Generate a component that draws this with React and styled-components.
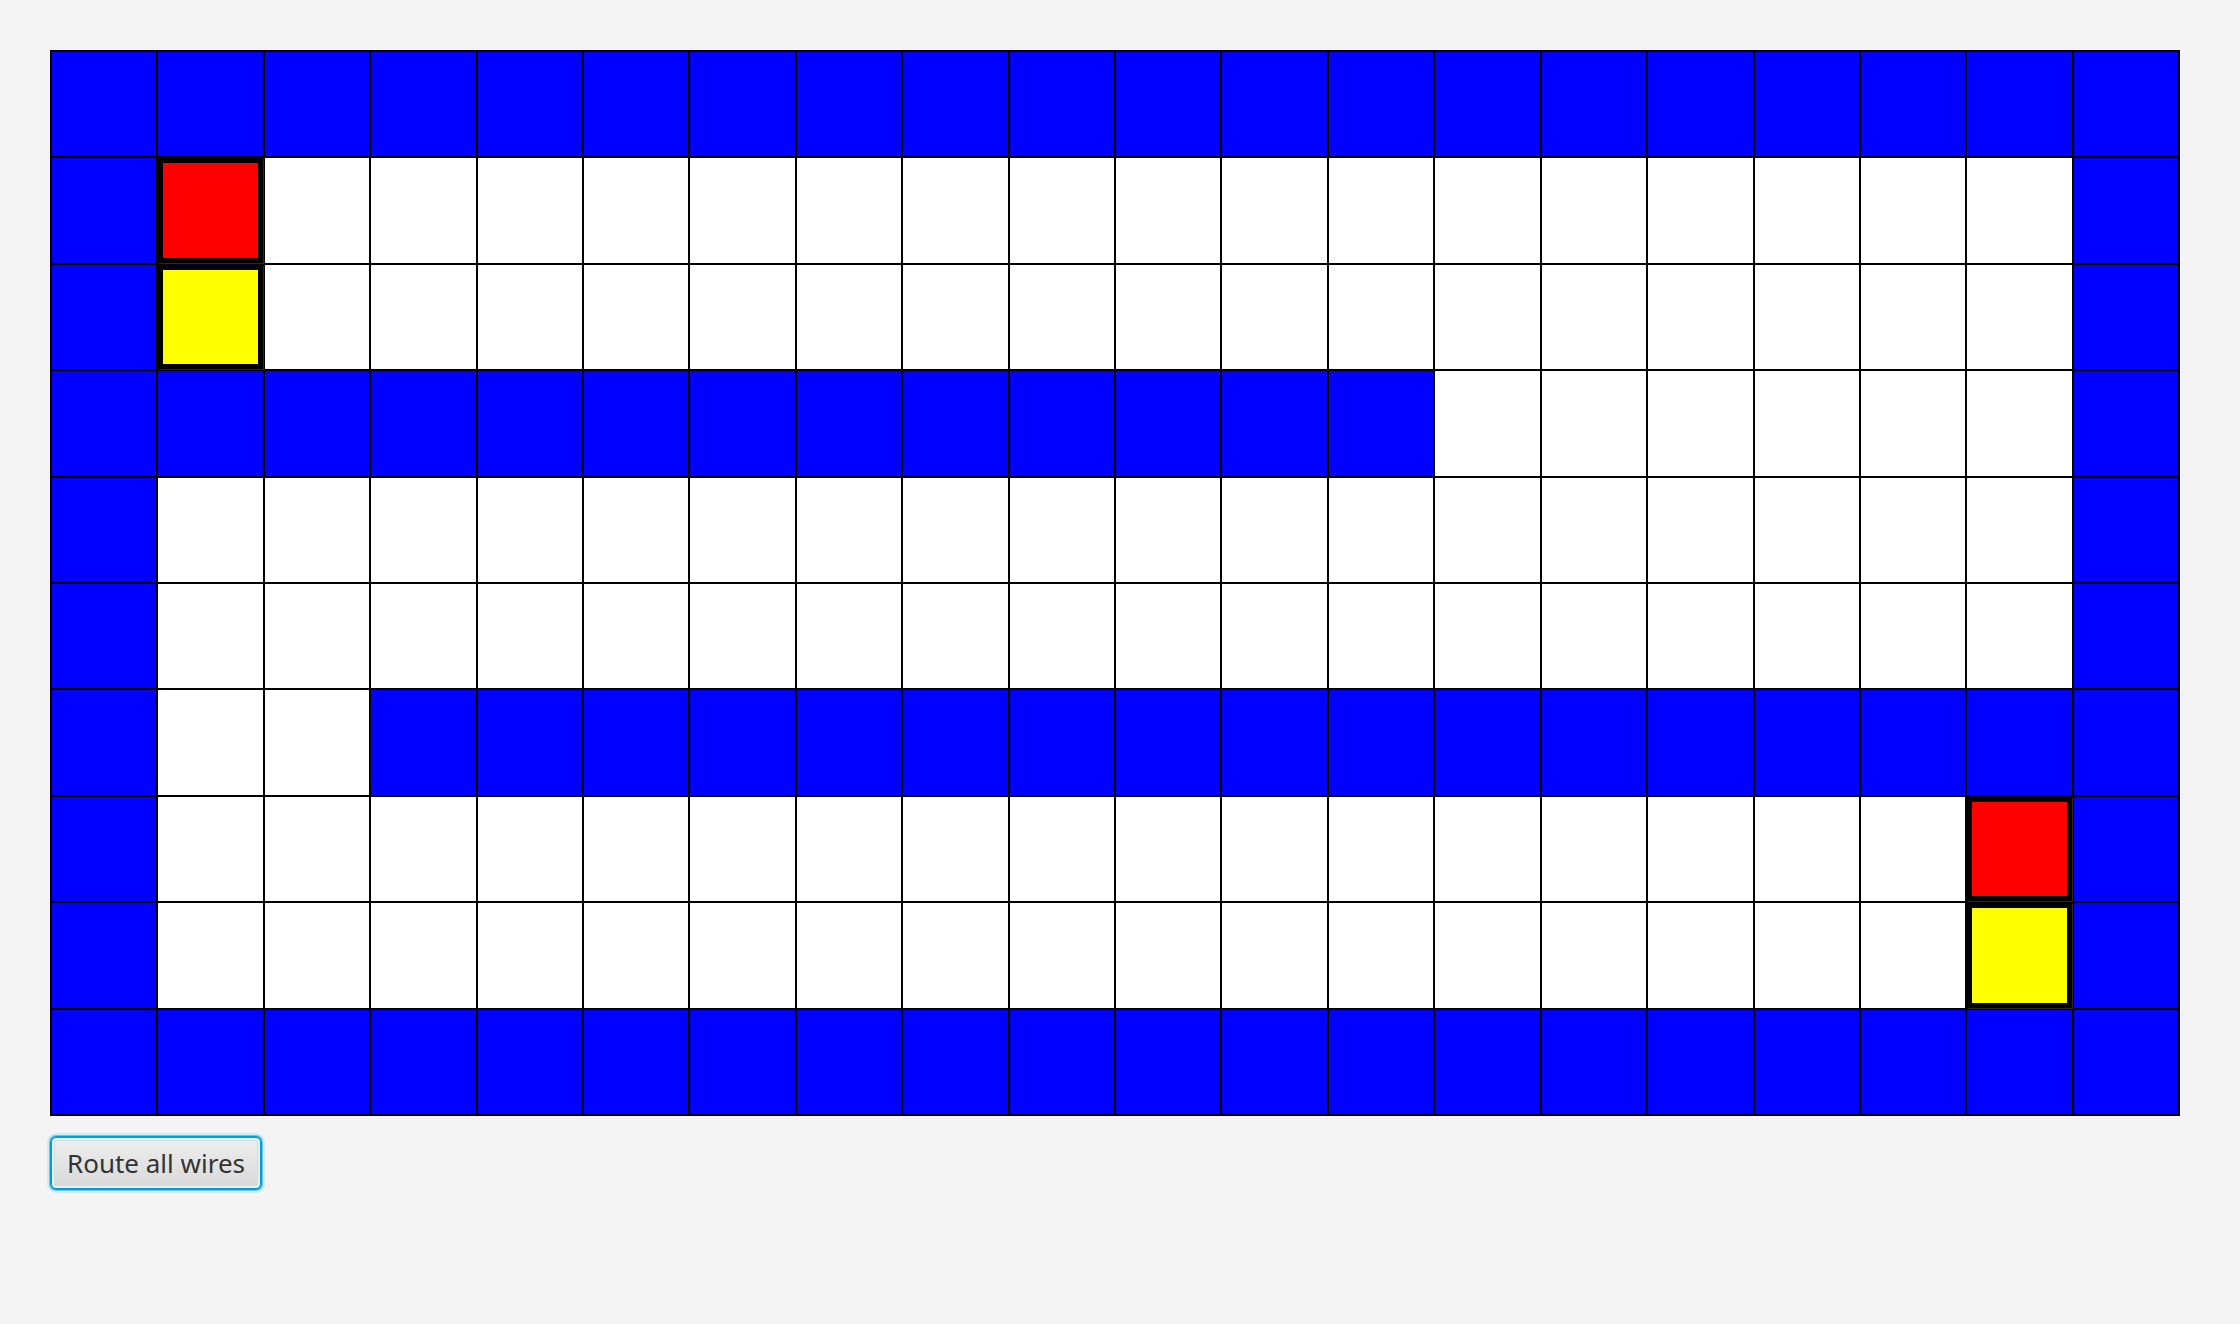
import React from "react";
import styled, { createGlobalStyle, css } from "styled-components";

const GlobalStyle = createGlobalStyle`
  body {
    margin: 0;
    background: #f4f4f4;
    font-family: "Noto Sans", "Open Sans", sans-serif;
  }
`;

const FILLS = {
  "#": "#0000ff",
  ".": "#ffffff",
  R: "#ff0000",
  Y: "#ffff00",
};

const LAYOUT = [
  "####################",
  "#R.................#",
  "#Y.................#",
  "#############......#",
  "#..................#",
  "#..................#",
  "#..#################",
  "#.................R#",
  "#.................Y#",
  "####################",
];

const Page = styled.main`
  display: flex;
  flex-direction: column;
  align-items: flex-start;
  gap: 20px;
  padding: 50px 60px 50px 50px;
`;

const Board = styled.div`
  display: grid;
  grid-template-columns: repeat(20, 1fr);
  gap: 2px;
  box-sizing: border-box;
  width: 100%;
  padding: 2px;
  background: #000000;
`;

const terminal = css`
  border: 5px solid #000000;
  box-shadow: 1px 1px 0 0 #33261a;
`;

const Cell = styled.div`
  box-sizing: border-box;
  aspect-ratio: 1;
  background: ${({ $kind }) => FILLS[$kind]};
  ${({ $kind }) => "RY".includes($kind) && terminal}
`;

const RouteButton = styled.button`
  padding: 7px 15px;
  border: 2px solid #039ed3;
  border-radius: 6px;
  background: linear-gradient(#efefef, #d9d9d9);
  box-shadow: 0 0 0 1px #6cc5e3, 0 0 0 3px #d3ebf3, inset 0 0 0 2px #e6eff2,
    inset 0 0 0 3px #c9e0e6;
  color: #333333;
  font-family: inherit;
  font-size: 26px;
  line-height: 36px;
  white-space: nowrap;
`;

export default function App() {
  return (
    <>
      <GlobalStyle />
      <Page>
        <Board role="img" aria-label="Wire routing board">
          {LAYOUT.flatMap((row, y) =>
            [...row].map((kind, x) => <Cell key={`${x}-${y}`} $kind={kind} />)
          )}
        </Board>
        <RouteButton type="button">Route all wires</RouteButton>
      </Page>
    </>
  );
}
